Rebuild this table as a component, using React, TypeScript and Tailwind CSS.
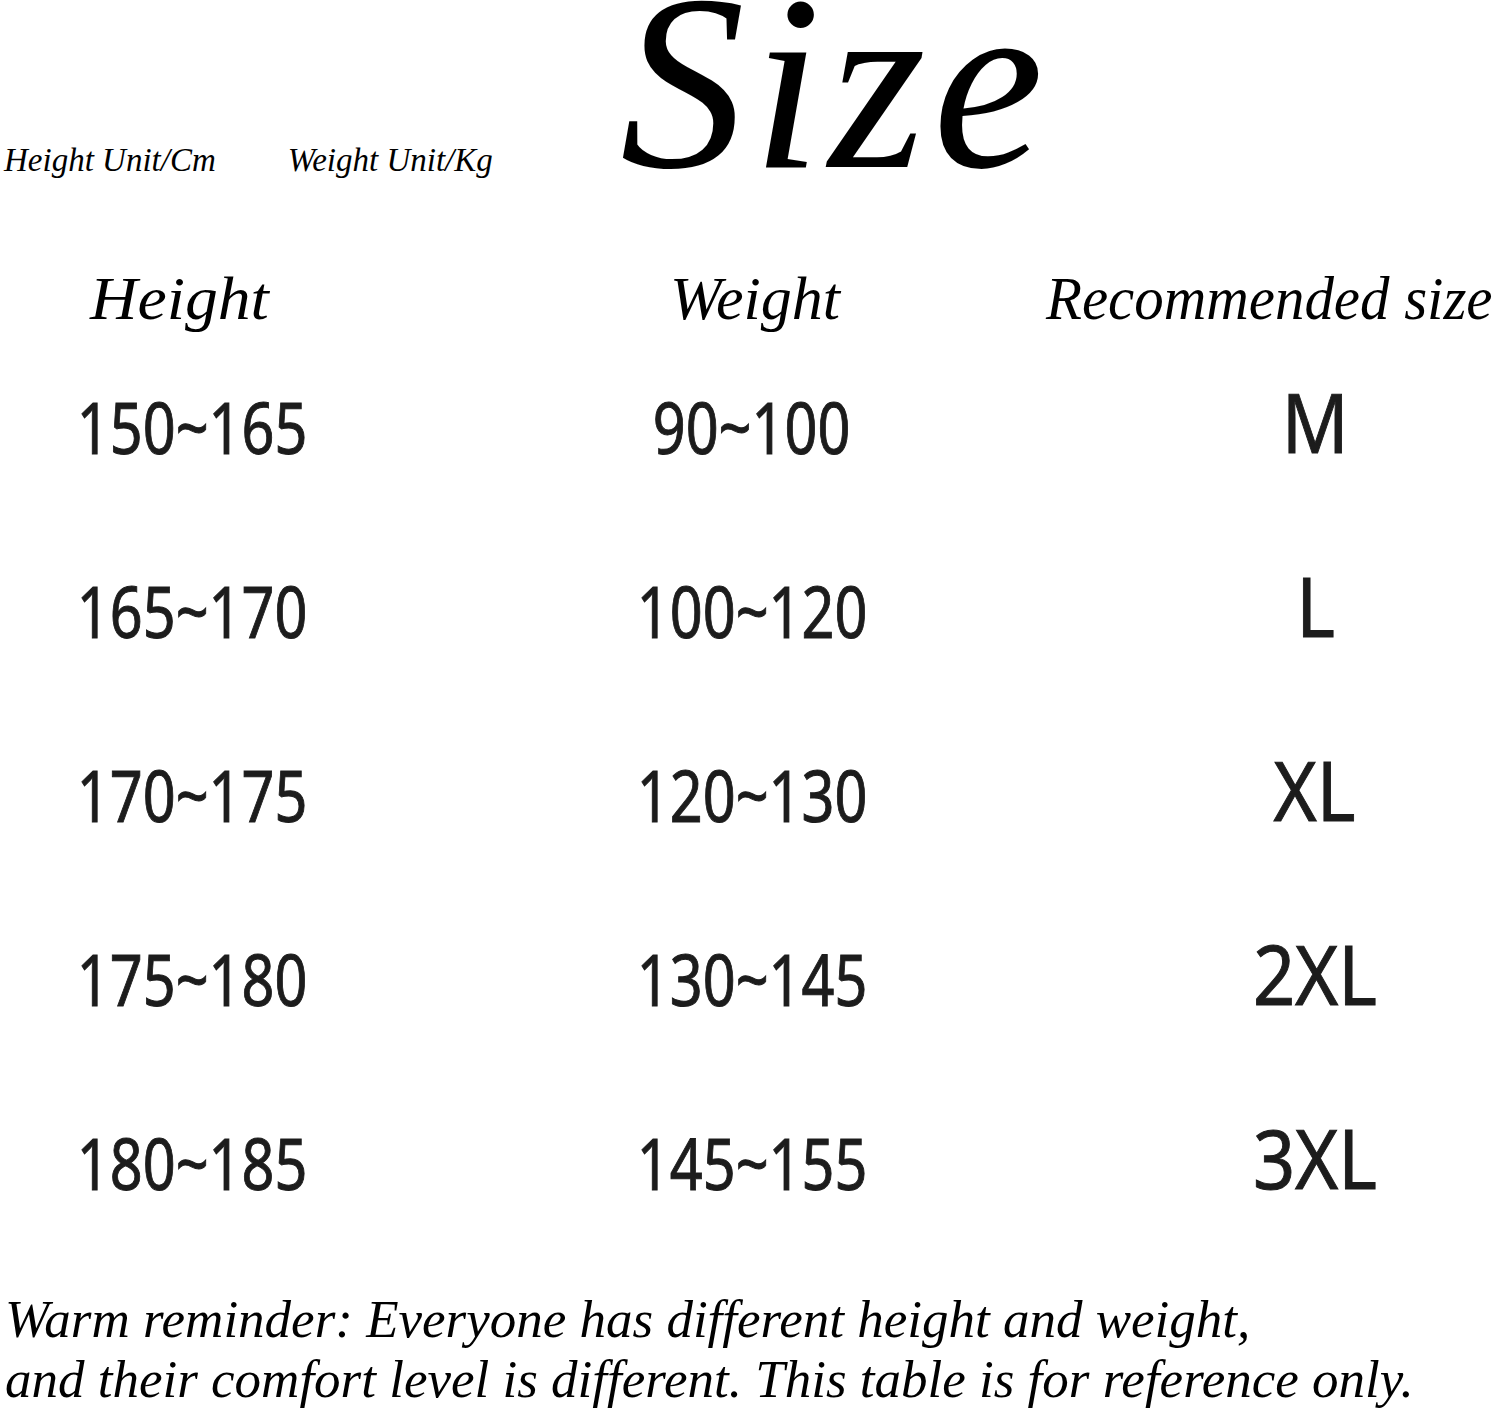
import React from "react";

const serif = { fontFamily: '"Liberation Serif", "Times New Roman", serif' };
const sans = { fontFamily: '"Noto Sans", "Open Sans", sans-serif' };

const rows = [
  ["150~165", "90~100", "M"],
  ["165~170", "100~120", "L"],
  ["170~175", "120~130", "XL"],
  ["175~180", "130~145", "2XL"],
  ["180~185", "145~155", "3XL"],
];

export default function App() {
  return (
    <div className="w-[1500px] h-[1413px] bg-white text-black overflow-hidden" style={serif}>
      {/* Top */}
      <div className="flex h-[258px] items-start">
        <div className="flex w-[620px] pt-[140px] italic text-[33px] leading-[40px] whitespace-nowrap">
          <span className="ml-[4px]">Height Unit/Cm</span>
          <span className="ml-[72px]">Weight Unit/Kg</span>
        </div>
        <div className="italic text-[250px] leading-[250px] -mt-[42px] tracking-[7px] whitespace-nowrap">Size</div>
      </div>

      {/* Column headers */}
      <div className="grid grid-cols-[670px_376px_454px] h-[88px] items-start italic text-[62px] leading-[80px] whitespace-nowrap">
        <div className="pl-[90px]"><span className="inline-block origin-left scale-x-[1.06]">Height</span></div>
        <div>Weight</div>
        <div><span className="inline-block origin-left scale-x-[0.95]">Recommended size</span></div>
      </div>

      {/* Rows */}
      <div className="flex flex-col -mt-[12px]" style={sans}>
        {rows.map((r) => (
          <div key={r[0]} className="grid grid-cols-[384px_736px_380px] h-[184px] items-center text-[72px] text-[#1c1c1c] [-webkit-text-stroke:1px_#1c1c1c]">
            <div className="flex justify-center"><span className="inline-block scale-x-[0.8]">{r[0]}</span></div>
            <div className="flex justify-center"><span className="inline-block scale-x-[0.8]">{r[1]}</span></div>
            <div className="flex justify-center pl-[10px] -mt-[10px] text-[82px]"><span className="inline-block scale-x-[0.9]">{r[2]}</span></div>
          </div>
        ))}
      </div>

      {/* Footer */}
      <div className="italic text-[53px] leading-[60px] pl-[5px] mt-[35px] whitespace-nowrap">
        <div>Warm reminder: Everyone has different height and weight,</div>
        <div>and their comfort level is different. This table is for reference only.</div>
      </div>
    </div>
  );
}
